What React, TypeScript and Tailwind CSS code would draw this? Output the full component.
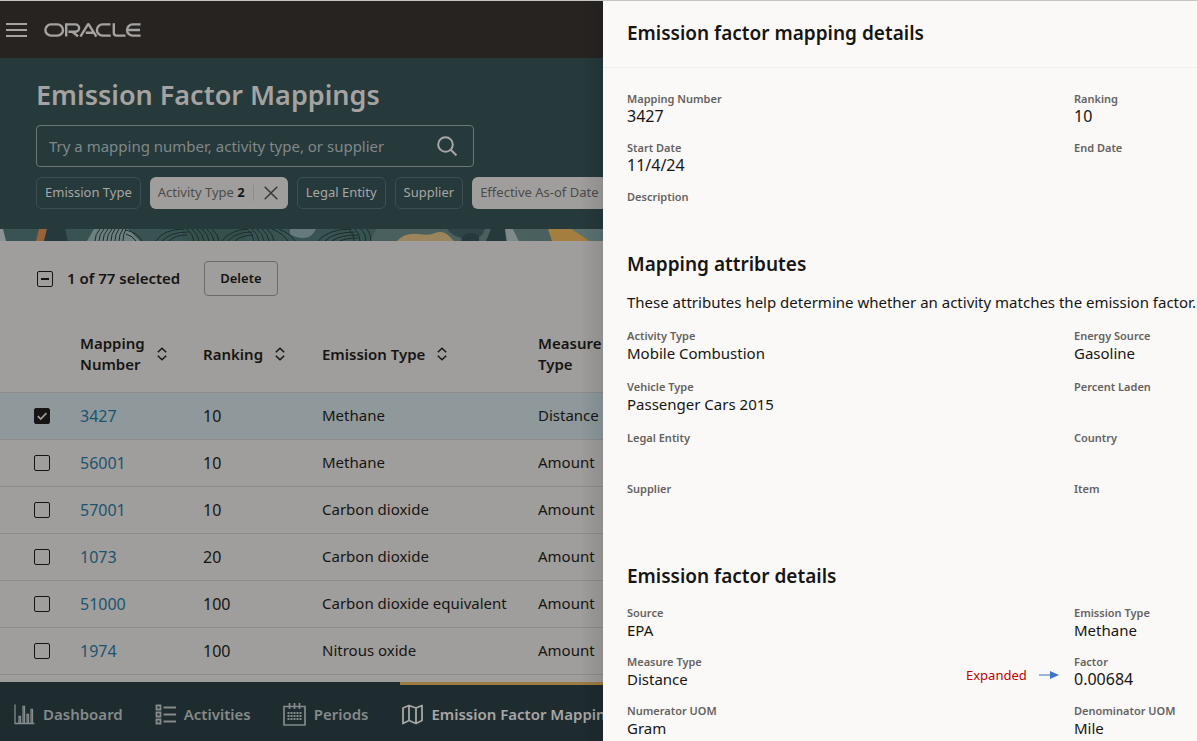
import React from "react";

const text = "font-['Noto_Sans','Open_Sans',sans-serif]";

const rows = [
  { id: "3427", ranking: "10", emission: "Methane", measure: "Distance", selected: true },
  { id: "56001", ranking: "10", emission: "Methane", measure: "Amount", selected: false },
  { id: "57001", ranking: "10", emission: "Carbon dioxide", measure: "Amount", selected: false },
  { id: "1073", ranking: "20", emission: "Carbon dioxide", measure: "Amount", selected: false },
  { id: "51000", ranking: "100", emission: "Carbon dioxide equivalent", measure: "Amount", selected: false },
  { id: "1974", ranking: "100", emission: "Nitrous oxide", measure: "Amount", selected: false },
];

type FieldData = { label: string; value?: string; numeric?: boolean };

const mappingFields: FieldData[] = [
  { label: "Mapping Number", value: "3427", numeric: true },
  { label: "Ranking", value: "10", numeric: true },
  { label: "Start Date", value: "11/4/24", numeric: true },
  { label: "End Date" },
  { label: "Description" },
];

const attributeFields: FieldData[] = [
  { label: "Activity Type", value: "Mobile Combustion" },
  { label: "Energy Source", value: "Gasoline" },
  { label: "Vehicle Type", value: "Passenger Cars 2015" },
  { label: "Percent Laden" },
  { label: "Legal Entity" },
  { label: "Country" },
  { label: "Supplier" },
  { label: "Item" },
];

const factorFields: FieldData[] = [
  { label: "Source", value: "EPA" },
  { label: "Emission Type", value: "Methane" },
  { label: "Measure Type", value: "Distance" },
  { label: "Factor", value: "0.00684", numeric: true },
  { label: "Numerator UOM", value: "Gram" },
  { label: "Denominator UOM", value: "Mile" },
];

function OracleLogo() {
  return (
    <svg role="img" aria-label="Oracle" width="97" height="14" viewBox="0 0 97 14" fill="none" stroke="#a5a3a1" strokeWidth="2.4">
      <path d="M7 1.4h6.4a5.6 5.6 0 0 1 0 11.2H7a5.6 5.6 0 0 1 0-11.2z" />
      <path d="M22.200 13.6V1.4h9.2a3.7 3.7 0 0 1 0 7.4h-7M28.4 8.8l5.6 4.6" />
      <path d="M36.4 13.6 43.6 1.8q.7-1 1.400 0l7.400 11.800M41.800 9.800h7.400" />
      <path d="M66.500 1.4h-8a5.6 5.6 0 0 0 0 11.2h8.2" />
      <path d="M69.8.3v9.500q0 2.8 2.8 2.8H81.500" />
      <path d="M96.6 1.4h-8a5.6 5.6 0 0 0 0 11.2h8M84 7h12" />
    </svg>
  );
}

function SortIcon() {
  return (
    <svg width="10" height="14" viewBox="0 0 10 14" fill="none" stroke="#161513" strokeWidth="1.5" aria-hidden="true">
      <path d="M.8 5.200 5 1.200l4.200 4M.8 8.800 5 12.800l4.200-4" />
    </svg>
  );
}

function DashboardIcon() {
  return (
    <svg width="21" height="21" viewBox="0 0 21 21" fill="none" stroke="currentColor" strokeWidth="1.3" aria-hidden="true">
      <path d="M1 .5v19h19.5M5 19v-6.500h1.500V19M9 19V2.500h1.500V19M13 19v-8.500h1.500V19M17 19V5.500h1.500V19" />
    </svg>
  );
}

function ActivitiesIcon() {
  return (
    <svg width="21" height="21" viewBox="0 0 21 21" fill="none" stroke="currentColor" strokeWidth="1.8" aria-hidden="true">
      <path d="M1.500 1.500h4v4h-4zM1.500 8.500h4v4h-4zM1.500 15.500h4v4h-4zM8.500 3.500H21M8.500 10.500H21M8.500 17.500H21" />
    </svg>
  );
}

function PeriodsIcon() {
  return (
    <svg width="23" height="23" viewBox="0 0 23 23" fill="none" stroke="currentColor" strokeWidth="1.700" aria-hidden="true">
      <path d="M1 3.500h21V22H1zM6.500 0v6M11.500 0v6M16.500 0v6" />
      <path d="M4.500 10h14M4.500 13h14M4.500 16h14" strokeWidth="2" strokeDasharray="2 1" />
    </svg>
  );
}

function MapIcon() {
  return (
    <svg width="21" height="21" viewBox="0 0 21 21" fill="none" stroke="currentColor" strokeWidth="1.8" strokeLinejoin="round" aria-hidden="true">
      <path d="M1 4 7 1.500l7 2.500 6-2.500V16.500L14 19.500 7 16.500 1 19.500zM7 1.500v15M14 4v15.500" />
    </svg>
  );
}

function Banner() {
  return (
    <svg className="block h-3 w-full" viewBox="0 0 603 12" preserveAspectRatio="xMinYMin slice" aria-hidden="true">
      <rect width="603" height="12" fill="#385351" />
      <path d="M376 0h227v12H370z" fill="#4a605f" />
      <path d="M0 0h3l3 12H0z" fill="#8c9191" />
      <path d="M39 0h8l-3 12h-8z" fill="#9a6238" />
      <path d="M47 0h18l3 12H44z" fill="#26393b" />
      <path d="M94 0h34l12 12H87z" fill="#6e7f80" />
      <path d="M183 0h62v12h-62z" fill="#35504b" />
      <path d="M290 0h26q-4 9-13 9-7 0-13-4z" fill="#667a7b" />
      <g fill="none" stroke="#1c2b2d" strokeWidth="1">
        <path d="M95 12q0-7 5-12M99 12q0-7 5-12M103 12q0-7 5-12M107 12q0-7 5-12M111 12q0-7 4-12M115 12q0-7 4-12M119 12q0-7 4-12M123 12q0-7 3-12" />
        <path d="M126 1q12 3 16 11M126 5q7 2 10 7M156 12q8-12 28-12M162 12q8-9 26-9M169 12q6-6 18-6M187 0q6 5 7 12M192 0q6 5 7 12M197 0q6 5 7 12M202 0q6 5 7 12M207 0q6 5 7 12M212 0q6 5 7 12" />
        <path d="M222 12q8-11 26-12M228 12q8-9 24-9M235 12q7-6 18-6M247 0q6 5 7 12M252 0q6 5 7 12M257 0q6 5 7 12M262 0q6 5 7 12M267 0q6 5 7 12M272 0q12 5 16 12M279 0q12 5 16 12" />
        <path d="M318 12q10-12 34-12M325 12q9-9 30-9M332 12q8-6 26-6M340 12q6-3 18-3M349 0q5 5 5 12M355 0q5 5 5 12M361 0q5 5 5 12M367 0q4 5 4 12" />
      </g>
      <path d="M397 12q8-9 22-7 10 2 16-1 8-3 14 3l5 5z" fill="#9b855c" />
      <path d="M447 0h38l-3 6q-6 5-20 3-10-2-15-9z" fill="#2f4547" />
      <path d="M461 12q2-9 12-8 8 2 6 8z" fill="#26393b" />
      <path d="M491 0h14l1 12h-20z" fill="#26393b" />
      <path d="M505 0h8l6 12h-12z" fill="#7d8a89" />
      <path d="M513 0h8l12 12h-14z" fill="#4a625f" />
      <path d="M548 0h24l18 12h-38z" fill="#a37e3f" />
      <path d="M572 0h31v12h-13z" fill="#5c7371" />
    </svg>
  );
}

function Field({ label, value, numeric }: FieldData) {
  return (
    <div className="h-9">
      <dt className="text-[11px] leading-[14px] font-semibold whitespace-nowrap text-[#65625f]">{label}</dt>
      <dd
        className={
          numeric
            ? "text-base leading-5 whitespace-nowrap text-[#161513]"
            : "text-[15px] leading-5 whitespace-nowrap text-[#161513]"
        }
      >
        {value}
      </dd>
    </div>
  );
}

function NavItem({ icon, label, active }: { icon: React.ReactNode; label: string; active?: boolean }) {
  return (
    <a
      href="#"
      aria-current={active ? "page" : undefined}
      className={
        active
          ? "flex shrink-0 items-center gap-2 border-t-3 border-[#9d7c42] pt-0.5 pl-0.5 text-[15px] font-semibold whitespace-nowrap text-[#a8a7a5]"
          : "flex shrink-0 items-center gap-2 pt-[5px] text-[15px] font-semibold whitespace-nowrap text-[#858a8a]"
      }
    >
      {icon}
      {label}
    </a>
  );
}

const chip = "h-8 shrink-0 rounded-md border border-[#3f4f51] px-2 text-[13px] whitespace-nowrap text-[#a8a7a5]";

export default function App() {
  return (
    <div className={`grid h-screen grid-cols-[minmax(0,603fr)_minmax(0,594fr)] overflow-hidden border-t border-[#c4c4c4] ${text}`}>
      <div className="relative flex min-h-0 flex-col overflow-hidden bg-[#a09e9c]">
        <header className="flex h-[57px] shrink-0 items-center gap-[17px] bg-[#272321] pl-1.5">
          <button type="button" aria-label="Menu" className="flex h-6 w-[21px] flex-col justify-center gap-1">
            <span className="h-0.5 w-full bg-[#a5a3a1]" />
            <span className="h-0.5 w-full bg-[#a5a3a1]" />
            <span className="h-0.5 w-full bg-[#a5a3a1]" />
          </button>
          <OracleLogo />
        </header>

        <section className="h-[171px] shrink-0 bg-[#26393b] pt-[19px] pl-9">
          <h1 className="text-[27px] leading-9 font-semibold whitespace-nowrap text-[#a5a3a1]">Emission Factor Mappings</h1>
          <div className="mt-3 flex h-[42px] w-[438px] items-center rounded-sm border border-[#6b7778] pr-4 pl-3">
            <input
              type="text"
              aria-label="Search mappings"
              placeholder="Try a mapping number, activity type, or supplier"
              className="h-full min-w-0 flex-1 bg-transparent text-[15px] text-[#a8a7a5] outline-none placeholder:text-[#808889]"
            />
            <button type="button" aria-label="Search">
              <svg width="20" height="20" viewBox="0 0 20 20" fill="none" stroke="#a8a7a5" strokeWidth="2">
                <circle cx="8.500" cy="8.500" r="7.300" />
                <path d="m13.800 13.800 5.600 5.600" />
              </svg>
            </button>
          </div>
          <div className="mt-2.5 flex gap-[9px]">
            <button type="button" className={chip}>Emission Type</button>
            <div className="flex h-8 shrink-0 items-center rounded-md bg-[#a09e9c] pl-2 text-[13px]">
              <button type="button" className="whitespace-nowrap text-[#4d4b49]">
                Activity Type <span className="font-bold text-[#161513]">2</span>
              </button>
              <span className="ml-2 h-4 w-px bg-[#8e8c8a]" />
              <button type="button" aria-label="Clear Activity Type" className="px-2.5">
                <svg width="14" height="14" viewBox="0 0 14 14" fill="none" stroke="#3a3836" strokeWidth="1.500">
                  <path d="m.7.7 12.600 12.600M13.300.7.7 13.300" />
                </svg>
              </button>
            </div>
            <button type="button" className={chip}>Legal Entity</button>
            <button type="button" className={chip}>Supplier</button>
            <button type="button" className="h-8 shrink-0 rounded-md bg-[#a09e9c] px-2 text-[13px] whitespace-nowrap text-[#4d4b49]">
              Effective As-of Date
            </button>
          </div>
        </section>
        <div className="shrink-0">
          <Banner />
        </div>

        <main className="min-h-0 flex-1 overflow-hidden">
          <div className="flex h-[75px] items-center pl-[37px]">
            <label className="flex items-center gap-3.5 text-[15px] font-semibold text-[#161513]">
              <span className="relative flex">
                <input type="checkbox" className="size-4 appearance-none rounded-[2px] border-[1.5px] border-[#161513]" />
                <span className="pointer-events-none absolute top-[7px] left-1 h-0.5 w-2 bg-[#161513]" />
              </span>
              1 of 77 selected
            </label>
            <button type="button" className="ml-6 h-[35px] rounded-sm border border-[#6d6b69] px-[15px] text-[13px] font-semibold text-[#161513]">
              Delete
            </button>
          </div>
          <table className="w-full min-w-[640px] table-fixed border-collapse text-left text-[15px] text-[#161513]">
            <colgroup>
              <col className="w-[80px]" />
              <col className="w-[123px]" />
              <col className="w-[119px]" />
              <col className="w-[216px]" />
              <col />
            </colgroup>
            <thead>
              <tr className="h-[76px]">
                <th scope="col" aria-label="Select" />
                <th scope="col" className="font-semibold">
                  <button type="button" className="flex items-center gap-3 text-left leading-[21px]">
                    <span>Mapping<br />Number</span>
                    <SortIcon />
                  </button>
                </th>
                <th scope="col" className="font-semibold">
                  <button type="button" className="flex items-center gap-3">Ranking<SortIcon /></button>
                </th>
                <th scope="col" className="font-semibold">
                  <button type="button" className="flex items-center gap-3">Emission Type<SortIcon /></button>
                </th>
                <th scope="col" className="leading-[21px] font-semibold">Measure<br />Type</th>
              </tr>
            </thead>
            <tbody>
              {rows.map((r) => (
                <tr key={r.id} className={r.selected ? "h-[47px] border-y border-[#8e8c8a] bg-[#8f999c]" : "h-[47px] border-y border-[#8e8c8a]"}>
                  <td className="pl-[34px]">
                    <span className="relative flex size-4">
                      <input
                        type="checkbox"
                        aria-label={`Select mapping ${r.id}`}
                        defaultChecked={r.selected}
                        className="peer size-4 appearance-none rounded-[2px] border-[1.5px] border-[#161513] checked:bg-[#161513]"
                      />
                      <svg className="pointer-events-none absolute inset-0 hidden peer-checked:block" width="16" height="16" viewBox="0 0 16 16" fill="none" stroke="#a09e9c" strokeWidth="1.700" aria-hidden="true">
                        <path d="m3.800 8.200 2.900 2.900 5.700-6" />
                      </svg>
                    </span>
                  </td>
                  <td className="text-base"><a href="#" className="text-[#1a5470]">{r.id}</a></td>
                  <td className="text-base">{r.ranking}</td>
                  <td className="whitespace-nowrap">{r.emission}</td>
                  <td>{r.measure}</td>
                </tr>
              ))}
            </tbody>
          </table>
        </main>

        <nav className="flex h-[59px] shrink-0 items-stretch gap-8 overflow-hidden bg-[#1e2b2f] pl-3.5">
          <NavItem icon={<DashboardIcon />} label="Dashboard" />
          <NavItem icon={<ActivitiesIcon />} label="Activities" />
          <NavItem icon={<PeriodsIcon />} label="Periods" />
          <NavItem icon={<MapIcon />} label="Emission Factor Mappings" active />
        </nav>
        <div className="pointer-events-none absolute inset-y-0 right-0 w-6 bg-linear-to-r from-transparent to-black/10" />
      </div>

      <aside aria-label="Emission factor mapping details" className="min-h-0 overflow-hidden bg-[#fbf9f8]">
        <header className="flex h-[67px] items-center border-b border-[#f1efed] pb-0.5 pl-6">
          <h2 className="text-[19px] font-semibold text-[#161513]">Emission factor mapping details</h2>
        </header>
        <div className="pt-6 pl-6">
          <dl className="grid grid-cols-[minmax(0,447fr)_minmax(0,123fr)] gap-y-[13px]">
            {mappingFields.map((f) => <Field key={f.label} {...f} />)}
          </dl>
          <h3 className="mt-6 text-[19px] leading-7 font-semibold text-[#161513]">Mapping attributes</h3>
          <p className="mt-3 text-[15px] leading-6 whitespace-nowrap text-[#161513]">
            These attributes help determine whether an activity matches the emission factor.
          </p>
          <dl className="mt-[15px] grid grid-cols-[minmax(0,447fr)_minmax(0,123fr)] gap-y-[15px]">
            {attributeFields.map((f) => <Field key={f.label} {...f} />)}
          </dl>
          <h3 className="mt-11 text-[19px] leading-7 font-semibold text-[#161513]">Emission factor details</h3>
          <div className="relative mt-4">
            <dl className="grid grid-cols-[minmax(0,447fr)_minmax(0,123fr)] gap-y-[13px]">
              {factorFields.map((f) => <Field key={f.label} {...f} />)}
            </dl>
            <div className="absolute top-[59px] left-[339px] flex items-center gap-3">
              <span className="text-[13px] leading-5 text-[#c00000]">Expanded</span>
              <svg width="20" height="8" viewBox="0 0 20 8" aria-hidden="true">
                <path d="M0 4h12" stroke="#3a75c4" strokeWidth="1" />
                <path d="M11 0l9 4-9 4z" fill="#3a75c4" />
              </svg>
            </div>
          </div>
        </div>
      </aside>
    </div>
  );
}
